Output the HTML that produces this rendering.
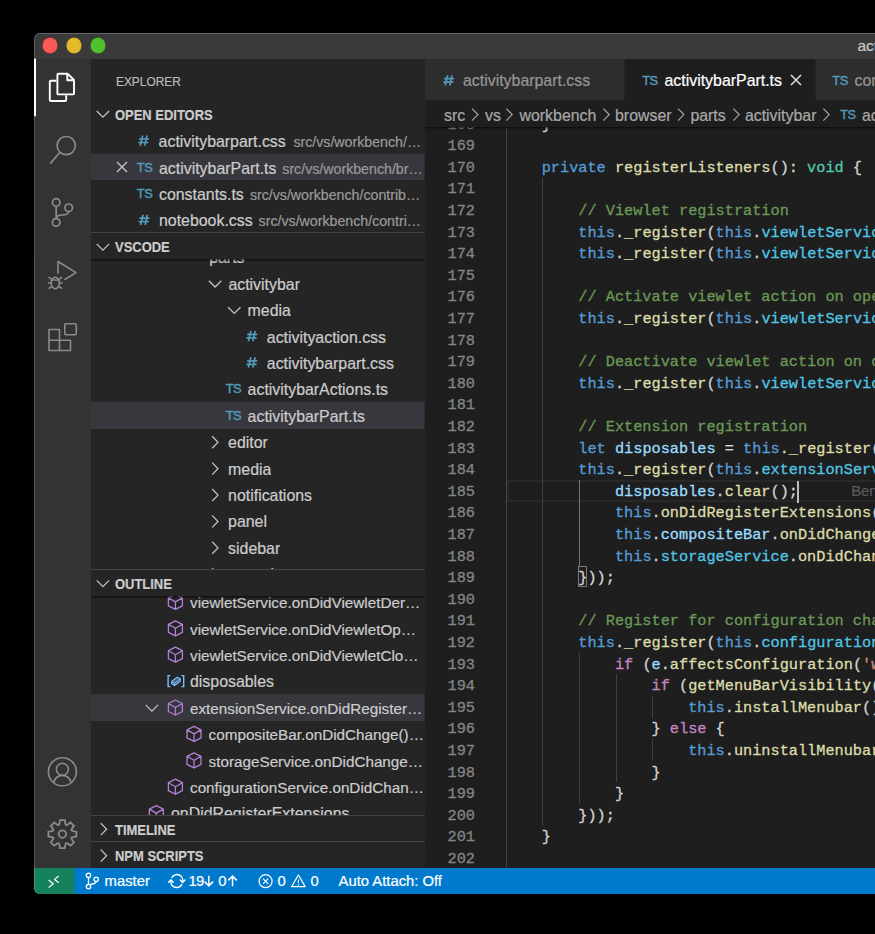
<!DOCTYPE html><html><head><meta charset="utf-8"><style>
*{margin:0;padding:0;box-sizing:border-box}
html,body{width:875px;height:934px;background:#000;overflow:hidden}
body{position:relative;font-family:"Liberation Sans",sans-serif;color:#ccc;-webkit-text-stroke:0.2px currentColor}
.a{position:absolute;white-space:nowrap}
#win{position:absolute;left:34px;top:32.5px;width:900px;height:861.5px;border-radius:6px;overflow:hidden;background:#1e1e1e}
#title{position:absolute;left:0;top:0;width:900px;height:26px;background:#3a3a3a}
.light{position:absolute;top:5.6px;width:14.6px;height:14.6px;border-radius:50%}
#act{position:absolute;left:0;top:26px;width:57px;height:809.5px;background:#333}
#side{position:absolute;left:57px;top:26px;width:333.5px;height:809.5px;background:#252526}
#status{position:absolute;left:0;top:835.5px;width:900px;height:26px;background:#007acc}
.row{position:absolute;height:26.4px;line-height:26.4px;font-size:15.9px;white-space:nowrap;color:#ccc;overflow:hidden;text-overflow:ellipsis}
.sel{position:absolute;left:91px;width:333.5px;height:26.4px;background:#37373d}
.hdr{position:absolute;left:91px;width:333.5px;height:27.4px;background:#252526;border-top:1px solid #434343}
.ht{position:absolute;font-size:14.4px;font-weight:700;color:#cccccc;line-height:26.4px;height:26.4px;transform:scaleX(0.9);transform-origin:0 0}
.desc{color:#9a9a9a;font-size:14.2px!important}
.ts{position:absolute;color:#519aba;font-weight:400;font-size:12.9px;letter-spacing:-0.45px;line-height:26.4px;height:26.4px;-webkit-text-stroke:0.45px currentColor}
.hash{position:absolute;color:#519aba;font-weight:700;font-size:16px;line-height:26.4px;height:26.4px}
.code{position:absolute;left:506px;height:21.6px;line-height:21.6px;font-family:"Liberation Mono",monospace;font-size:15.255px;white-space:pre;color:#d4d4d4;-webkit-text-stroke:0.3px currentColor}
.ln{position:absolute;left:420px;width:55px;text-align:right;height:21.6px;line-height:21.6px;font-family:"Liberation Mono",monospace;font-size:15.255px;color:#858585;-webkit-text-stroke:0.3px currentColor}
.k{color:#569cd6}.f{color:#dcdcaa}.c{color:#6a9955}.v{color:#9cdcfe}.p{color:#52c5e4}.t{color:#4ec9b0}.kw{color:#c586c0}.s{color:#ce9178}
.sb{position:absolute;top:867.6px;height:26px;line-height:26px;font-size:14.8px;color:#fff;white-space:nowrap}
</style></head><body><div id="win"><div id="title"><div class="light" style="left:8.9px;background:#fb5a55;box-shadow:0 0 0 0.6px #d64440"></div><div class="light" style="left:32.8px;background:#e4b92b;box-shadow:0 0 0 0.6px #c29a1e"></div><div class="light" style="left:56.8px;background:#50c02b;box-shadow:0 0 0 0.6px #3e9d22"></div></div><div id="act"></div><div id="side"></div><div id="status"></div></div><div class="a" style="left:424.5px;top:58.6px;width:460px;height:42.1px;background:#252526"></div><div class="a" style="left:424.5px;top:58.6px;width:199.5px;height:42.1px;background:#2d2d2d"></div><div class="a" style="left:625.3px;top:58.6px;width:189.4px;height:42.1px;background:#1e1e1e"></div><div class="a" style="left:815.8px;top:58.6px;width:80px;height:42.1px;background:#2d2d2d"></div><div class="a" style="left:463px;font-size:15.9px;line-height:41.6px;height:41.6px;top:60.3px;color:#969696">activitybarpart.css</div><div class="a" style="left:642.2px;color:#519aba;font-weight:400;font-size:12.9px;letter-spacing:-0.45px;-webkit-text-stroke:0.45px currentColor;line-height:41.6px;height:41.6px;top:59.5px">TS</div><div class="a" style="left:664.5px;font-size:15.9px;line-height:41.6px;height:41.6px;top:60.3px;color:#ffffff">activitybarPart.ts</div><div class="a" style="left:832.3px;color:#519aba;font-weight:400;font-size:12.9px;letter-spacing:-0.45px;-webkit-text-stroke:0.45px currentColor;line-height:41.6px;height:41.6px;top:59.5px">TS</div><div class="a" style="left:854.5px;font-size:15.9px;line-height:41.6px;height:41.6px;top:60.3px;color:#969696">constants.ts</div><div class="a" style="left:424.5px;top:100.2px;width:460px;height:768px;background:#1e1e1e;overflow:hidden"></div><div class="a" style="left:424.5px;top:100.2px;width:460px;height:768px;overflow:hidden"><div class="a" style="left:82.80000000000001px;top:379.40000000000003px;width:460px;height:22.8px;border:2.3px solid #282828;border-right:none"></div><div class="a" style="left:81.30000000000001px;top:12.600000000000009px;width:1px;height:21.6px;background:#404040"></div><div class="a" style="left:81.30000000000001px;top:34.2px;width:1px;height:21.6px;background:#404040"></div><div class="a" style="left:81.30000000000001px;top:55.8px;width:1px;height:21.6px;background:#404040"></div><div class="a" style="left:81.30000000000001px;top:77.40000000000002px;width:1px;height:21.6px;background:#404040"></div><div class="a" style="left:117.91200000000003px;top:77.40000000000002px;width:1px;height:21.6px;background:#404040"></div><div class="a" style="left:81.30000000000001px;top:99.00000000000001px;width:1px;height:21.6px;background:#404040"></div><div class="a" style="left:117.91200000000003px;top:99.00000000000001px;width:1px;height:21.6px;background:#404040"></div><div class="a" style="left:81.30000000000001px;top:120.60000000000001px;width:1px;height:21.6px;background:#404040"></div><div class="a" style="left:117.91200000000003px;top:120.60000000000001px;width:1px;height:21.6px;background:#404040"></div><div class="a" style="left:81.30000000000001px;top:142.2px;width:1px;height:21.6px;background:#404040"></div><div class="a" style="left:117.91200000000003px;top:142.2px;width:1px;height:21.6px;background:#404040"></div><div class="a" style="left:81.30000000000001px;top:163.8px;width:1px;height:21.6px;background:#404040"></div><div class="a" style="left:117.91200000000003px;top:163.8px;width:1px;height:21.6px;background:#404040"></div><div class="a" style="left:81.30000000000001px;top:185.40000000000003px;width:1px;height:21.6px;background:#404040"></div><div class="a" style="left:117.91200000000003px;top:185.40000000000003px;width:1px;height:21.6px;background:#404040"></div><div class="a" style="left:81.30000000000001px;top:207.00000000000006px;width:1px;height:21.6px;background:#404040"></div><div class="a" style="left:117.91200000000003px;top:207.00000000000006px;width:1px;height:21.6px;background:#404040"></div><div class="a" style="left:81.30000000000001px;top:228.60000000000002px;width:1px;height:21.6px;background:#404040"></div><div class="a" style="left:117.91200000000003px;top:228.60000000000002px;width:1px;height:21.6px;background:#404040"></div><div class="a" style="left:81.30000000000001px;top:250.2px;width:1px;height:21.6px;background:#404040"></div><div class="a" style="left:117.91200000000003px;top:250.2px;width:1px;height:21.6px;background:#404040"></div><div class="a" style="left:81.30000000000001px;top:271.8px;width:1px;height:21.6px;background:#404040"></div><div class="a" style="left:117.91200000000003px;top:271.8px;width:1px;height:21.6px;background:#404040"></div><div class="a" style="left:81.30000000000001px;top:293.40000000000003px;width:1px;height:21.6px;background:#404040"></div><div class="a" style="left:117.91200000000003px;top:293.40000000000003px;width:1px;height:21.6px;background:#404040"></div><div class="a" style="left:81.30000000000001px;top:315.00000000000006px;width:1px;height:21.6px;background:#404040"></div><div class="a" style="left:117.91200000000003px;top:315.00000000000006px;width:1px;height:21.6px;background:#404040"></div><div class="a" style="left:81.30000000000001px;top:336.6000000000001px;width:1px;height:21.6px;background:#404040"></div><div class="a" style="left:117.91200000000003px;top:336.6000000000001px;width:1px;height:21.6px;background:#404040"></div><div class="a" style="left:81.30000000000001px;top:358.2px;width:1px;height:21.6px;background:#404040"></div><div class="a" style="left:117.91200000000003px;top:358.2px;width:1px;height:21.6px;background:#404040"></div><div class="a" style="left:81.30000000000001px;top:379.8px;width:1px;height:21.6px;background:#404040"></div><div class="a" style="left:117.91200000000003px;top:379.8px;width:1px;height:21.6px;background:#404040"></div><div class="a" style="left:154.52400000000011px;top:379.8px;width:1px;height:21.6px;background:#747474"></div><div class="a" style="left:81.30000000000001px;top:401.40000000000003px;width:1px;height:21.6px;background:#404040"></div><div class="a" style="left:117.91200000000003px;top:401.40000000000003px;width:1px;height:21.6px;background:#404040"></div><div class="a" style="left:154.52400000000011px;top:401.40000000000003px;width:1px;height:21.6px;background:#747474"></div><div class="a" style="left:81.30000000000001px;top:423.00000000000006px;width:1px;height:21.6px;background:#404040"></div><div class="a" style="left:117.91200000000003px;top:423.00000000000006px;width:1px;height:21.6px;background:#404040"></div><div class="a" style="left:154.52400000000011px;top:423.00000000000006px;width:1px;height:21.6px;background:#747474"></div><div class="a" style="left:81.30000000000001px;top:444.6000000000001px;width:1px;height:21.6px;background:#404040"></div><div class="a" style="left:117.91200000000003px;top:444.6000000000001px;width:1px;height:21.6px;background:#404040"></div><div class="a" style="left:154.52400000000011px;top:444.6000000000001px;width:1px;height:21.6px;background:#747474"></div><div class="a" style="left:81.30000000000001px;top:466.2px;width:1px;height:21.6px;background:#404040"></div><div class="a" style="left:117.91200000000003px;top:466.2px;width:1px;height:21.6px;background:#404040"></div><div class="a" style="left:81.30000000000001px;top:487.8px;width:1px;height:21.6px;background:#404040"></div><div class="a" style="left:117.91200000000003px;top:487.8px;width:1px;height:21.6px;background:#404040"></div><div class="a" style="left:81.30000000000001px;top:509.40000000000003px;width:1px;height:21.6px;background:#404040"></div><div class="a" style="left:117.91200000000003px;top:509.40000000000003px;width:1px;height:21.6px;background:#404040"></div><div class="a" style="left:81.30000000000001px;top:531.0px;width:1px;height:21.6px;background:#404040"></div><div class="a" style="left:117.91200000000003px;top:531.0px;width:1px;height:21.6px;background:#404040"></div><div class="a" style="left:81.30000000000001px;top:552.6px;width:1px;height:21.6px;background:#404040"></div><div class="a" style="left:117.91200000000003px;top:552.6px;width:1px;height:21.6px;background:#404040"></div><div class="a" style="left:154.52400000000011px;top:552.6px;width:1px;height:21.6px;background:#404040"></div><div class="a" style="left:81.30000000000001px;top:574.1999999999999px;width:1px;height:21.6px;background:#404040"></div><div class="a" style="left:117.91200000000003px;top:574.1999999999999px;width:1px;height:21.6px;background:#404040"></div><div class="a" style="left:154.52400000000011px;top:574.1999999999999px;width:1px;height:21.6px;background:#404040"></div><div class="a" style="left:191.13600000000008px;top:574.1999999999999px;width:1px;height:21.6px;background:#404040"></div><div class="a" style="left:81.30000000000001px;top:595.8px;width:1px;height:21.6px;background:#404040"></div><div class="a" style="left:117.91200000000003px;top:595.8px;width:1px;height:21.6px;background:#404040"></div><div class="a" style="left:154.52400000000011px;top:595.8px;width:1px;height:21.6px;background:#404040"></div><div class="a" style="left:191.13600000000008px;top:595.8px;width:1px;height:21.6px;background:#404040"></div><div class="a" style="left:227.74800000000005px;top:595.8px;width:1px;height:21.6px;background:#404040"></div><div class="a" style="left:81.30000000000001px;top:617.4px;width:1px;height:21.6px;background:#404040"></div><div class="a" style="left:117.91200000000003px;top:617.4px;width:1px;height:21.6px;background:#404040"></div><div class="a" style="left:154.52400000000011px;top:617.4px;width:1px;height:21.6px;background:#404040"></div><div class="a" style="left:191.13600000000008px;top:617.4px;width:1px;height:21.6px;background:#404040"></div><div class="a" style="left:81.30000000000001px;top:639.0px;width:1px;height:21.6px;background:#404040"></div><div class="a" style="left:117.91200000000003px;top:639.0px;width:1px;height:21.6px;background:#404040"></div><div class="a" style="left:154.52400000000011px;top:639.0px;width:1px;height:21.6px;background:#404040"></div><div class="a" style="left:191.13600000000008px;top:639.0px;width:1px;height:21.6px;background:#404040"></div><div class="a" style="left:227.74800000000005px;top:639.0px;width:1px;height:21.6px;background:#404040"></div><div class="a" style="left:81.30000000000001px;top:660.6px;width:1px;height:21.6px;background:#404040"></div><div class="a" style="left:117.91200000000003px;top:660.6px;width:1px;height:21.6px;background:#404040"></div><div class="a" style="left:154.52400000000011px;top:660.6px;width:1px;height:21.6px;background:#404040"></div><div class="a" style="left:191.13600000000008px;top:660.6px;width:1px;height:21.6px;background:#404040"></div><div class="a" style="left:81.30000000000001px;top:682.1999999999999px;width:1px;height:21.6px;background:#404040"></div><div class="a" style="left:117.91200000000003px;top:682.1999999999999px;width:1px;height:21.6px;background:#404040"></div><div class="a" style="left:154.52400000000011px;top:682.1999999999999px;width:1px;height:21.6px;background:#404040"></div><div class="a" style="left:81.30000000000001px;top:703.8px;width:1px;height:21.6px;background:#404040"></div><div class="a" style="left:117.91200000000003px;top:703.8px;width:1px;height:21.6px;background:#404040"></div><div class="a" style="left:81.30000000000001px;top:725.4px;width:1px;height:21.6px;background:#404040"></div><div class="a" style="left:81.30000000000001px;top:747.0px;width:1px;height:21.6px;background:#404040"></div><div class="ln" style="left:-4.5px;top:14.40000000000001px">168</div><div class="code" style="left:80.60000000000002px;top:14.40000000000001px;tab-size:4">	}</div><div class="ln" style="left:-4.5px;top:36.0px">169</div><div class="code" style="left:80.60000000000002px;top:36.0px;tab-size:4"></div><div class="ln" style="left:-4.5px;top:57.599999999999994px">170</div><div class="code" style="left:80.60000000000002px;top:57.599999999999994px;tab-size:4">	<span class="k">private</span> <span class="f">registerListeners</span>(): <span class="t">void</span> {</div><div class="ln" style="left:-4.5px;top:79.20000000000002px">171</div><div class="code" style="left:80.60000000000002px;top:79.20000000000002px;tab-size:4"></div><div class="ln" style="left:-4.5px;top:100.80000000000001px">172</div><div class="code" style="left:80.60000000000002px;top:100.80000000000001px;tab-size:4">		<span class="c">// Viewlet registration</span></div><div class="ln" style="left:-4.5px;top:122.4px">173</div><div class="code" style="left:80.60000000000002px;top:122.4px;tab-size:4">		<span class="k">this</span>.<span class="f">_register</span>(<span class="k">this</span>.<span class="p">viewletService</span>.<span class="f">onDidViewletRegister</span></div><div class="ln" style="left:-4.5px;top:144.0px">174</div><div class="code" style="left:80.60000000000002px;top:144.0px;tab-size:4">		<span class="k">this</span>.<span class="f">_register</span>(<span class="k">this</span>.<span class="p">viewletService</span>.<span class="f">onDidViewletDeregister</span></div><div class="ln" style="left:-4.5px;top:165.60000000000002px">175</div><div class="code" style="left:80.60000000000002px;top:165.60000000000002px;tab-size:4"></div><div class="ln" style="left:-4.5px;top:187.20000000000005px">176</div><div class="code" style="left:80.60000000000002px;top:187.20000000000005px;tab-size:4">		<span class="c">// Activate viewlet action on opening</span></div><div class="ln" style="left:-4.5px;top:208.80000000000007px">177</div><div class="code" style="left:80.60000000000002px;top:208.80000000000007px;tab-size:4">		<span class="k">this</span>.<span class="f">_register</span>(<span class="k">this</span>.<span class="p">viewletService</span>.<span class="f">onDidViewletOpen</span></div><div class="ln" style="left:-4.5px;top:230.40000000000003px">178</div><div class="code" style="left:80.60000000000002px;top:230.40000000000003px;tab-size:4"></div><div class="ln" style="left:-4.5px;top:252.0px">179</div><div class="code" style="left:80.60000000000002px;top:252.0px;tab-size:4">		<span class="c">// Deactivate viewlet action on close</span></div><div class="ln" style="left:-4.5px;top:273.6px">180</div><div class="code" style="left:80.60000000000002px;top:273.6px;tab-size:4">		<span class="k">this</span>.<span class="f">_register</span>(<span class="k">this</span>.<span class="p">viewletService</span>.<span class="f">onDidViewletClose</span></div><div class="ln" style="left:-4.5px;top:295.20000000000005px">181</div><div class="code" style="left:80.60000000000002px;top:295.20000000000005px;tab-size:4"></div><div class="ln" style="left:-4.5px;top:316.80000000000007px">182</div><div class="code" style="left:80.60000000000002px;top:316.80000000000007px;tab-size:4">		<span class="c">// Extension registration</span></div><div class="ln" style="left:-4.5px;top:338.4000000000001px">183</div><div class="code" style="left:80.60000000000002px;top:338.4000000000001px;tab-size:4">		<span class="k">let</span> <span class="v">disposables</span> = <span class="k">this</span>.<span class="f">_register</span>(<span class="k">new</span> <span class="t">DisposableStore</span></div><div class="ln" style="left:-4.5px;top:360.0px">184</div><div class="code" style="left:80.60000000000002px;top:360.0px;tab-size:4">		<span class="k">this</span>.<span class="f">_register</span>(<span class="k">this</span>.<span class="p">extensionService</span>.<span class="f">onDidRegisterExtensions</span></div><div class="ln" style="left:-4.5px;top:381.6px">185</div><div class="code" style="left:80.60000000000002px;top:381.6px;tab-size:4">			<span class="v">disposables</span>.<span class="f">clear</span>();</div><div class="ln" style="left:-4.5px;top:403.20000000000005px">186</div><div class="code" style="left:80.60000000000002px;top:403.20000000000005px;tab-size:4">			<span class="k">this</span>.<span class="f">onDidRegisterExtensions</span>();</div><div class="ln" style="left:-4.5px;top:424.80000000000007px">187</div><div class="code" style="left:80.60000000000002px;top:424.80000000000007px;tab-size:4">			<span class="k">this</span>.<span class="v">compositeBar</span>.<span class="f">onDidChange</span>(() =&gt; </div><div class="ln" style="left:-4.5px;top:446.4000000000001px">188</div><div class="code" style="left:80.60000000000002px;top:446.4000000000001px;tab-size:4">			<span class="k">this</span>.<span class="p">storageService</span>.<span class="f">onDidChangeStorage</span>(e =&gt; </div><div class="ln" style="left:-4.5px;top:468.0px">189</div><div class="code" style="left:80.60000000000002px;top:468.0px;tab-size:4">		}));</div><div class="ln" style="left:-4.5px;top:489.6px">190</div><div class="code" style="left:80.60000000000002px;top:489.6px;tab-size:4"></div><div class="ln" style="left:-4.5px;top:511.20000000000005px">191</div><div class="code" style="left:80.60000000000002px;top:511.20000000000005px;tab-size:4">		<span class="c">// Register for configuration changes</span></div><div class="ln" style="left:-4.5px;top:532.8px">192</div><div class="code" style="left:80.60000000000002px;top:532.8px;tab-size:4">		<span class="k">this</span>.<span class="f">_register</span>(<span class="k">this</span>.<span class="p">configurationService</span>.</div><div class="ln" style="left:-4.5px;top:554.4px">193</div><div class="code" style="left:80.60000000000002px;top:554.4px;tab-size:4">			<span class="kw">if</span> (<span class="v">e</span>.<span class="f">affectsConfiguration</span>(<span class="s">&#x27;window.menuBarVisibility&#x27;</span></div><div class="ln" style="left:-4.5px;top:575.9999999999999px">194</div><div class="code" style="left:80.60000000000002px;top:575.9999999999999px;tab-size:4">				<span class="kw">if</span> (<span class="f">getMenuBarVisibility</span>(<span class="k">this</span></div><div class="ln" style="left:-4.5px;top:597.5999999999999px">195</div><div class="code" style="left:80.60000000000002px;top:597.5999999999999px;tab-size:4">					<span class="k">this</span>.<span class="f">installMenubar</span>();</div><div class="ln" style="left:-4.5px;top:619.1999999999999px">196</div><div class="code" style="left:80.60000000000002px;top:619.1999999999999px;tab-size:4">				} <span class="kw">else</span> {</div><div class="ln" style="left:-4.5px;top:640.8px">197</div><div class="code" style="left:80.60000000000002px;top:640.8px;tab-size:4">					<span class="k">this</span>.<span class="f">uninstallMenubar</span>();</div><div class="ln" style="left:-4.5px;top:662.4px">198</div><div class="code" style="left:80.60000000000002px;top:662.4px;tab-size:4">				}</div><div class="ln" style="left:-4.5px;top:683.9999999999999px">199</div><div class="code" style="left:80.60000000000002px;top:683.9999999999999px;tab-size:4">			}</div><div class="ln" style="left:-4.5px;top:705.5999999999999px">200</div><div class="code" style="left:80.60000000000002px;top:705.5999999999999px;tab-size:4">		}));</div><div class="ln" style="left:-4.5px;top:727.1999999999999px">201</div><div class="code" style="left:80.60000000000002px;top:727.1999999999999px;tab-size:4">	}</div><div class="ln" style="left:-4.5px;top:748.8px">202</div><div class="code" style="left:80.60000000000002px;top:748.8px;tab-size:4"></div><div class="a" style="left:426.70000000000005px;top:381.1px;height:21.6px;line-height:21.6px;font-size:14.8px;color:#5c5c5c">Benjamin Pasero, 2 years ago</div><div class="a" style="left:372.29999999999995px;top:380.40000000000003px;width:2.6px;height:22.200000000000003px;background:#bdbdbd"></div><div class="a" style="left:153.62400000000008px;top:465.59999999999997px;width:9.353px;height:21.200000000000003px;border:1px solid #7c7c7c"></div></div><div class="a" style="left:424.5px;top:100.7px;width:460px;height:26.4px;background:#1e1e1e;box-shadow:0 2px 2px -1px rgba(0,0,0,0.7)"></div><div class="a" style="left:444px;top:102.6px;height:26.4px;line-height:26.4px;font-size:15.9px;color:#a9a9a9">src</div><div class="a" style="left:485px;top:102.6px;height:26.4px;line-height:26.4px;font-size:15.9px;color:#a9a9a9">vs</div><div class="a" style="left:519.5px;top:102.6px;height:26.4px;line-height:26.4px;font-size:15.9px;color:#a9a9a9">workbench</div><div class="a" style="left:615px;top:102.6px;height:26.4px;line-height:26.4px;font-size:15.9px;color:#a9a9a9">browser</div><div class="a" style="left:690.4px;top:102.6px;height:26.4px;line-height:26.4px;font-size:15.9px;color:#a9a9a9">parts</div><div class="a" style="left:744.9px;top:102.6px;height:26.4px;line-height:26.4px;font-size:15.9px;color:#a9a9a9">activitybar</div><div class="a" style="left:862px;top:102.6px;height:26.4px;line-height:26.4px;font-size:15.9px;color:#a9a9a9">activitybarPart.ts</div><div class="a" style="left:840.3px;top:102.3px;height:26.4px;line-height:26.4px;font-size:12.6px;letter-spacing:-0.4px;font-weight:400;-webkit-text-stroke:0.45px currentColor;color:#519aba">TS</div><div class="a" style="left:0;top:0;width:875px;height:934px;overflow:hidden;clip-path:inset(58.6px 450.5px 66px 91px)"><div class="a" style="left:115.6px;top:61.1px;height:42px;line-height:42px;font-size:13px;transform:scaleX(0.915);transform-origin:0 0;color:#bbbbbb">EXPLORER</div><div class="ht" style="left:115.3px;top:101.7px">OPEN EDITORS</div><div class="sel" style="top:154.0px"></div><div class="row" style="left:158.6px;top:129.1px">activitybarpart.css</div><div class="row desc" style="left:293.4px;top:129.1px">src/vs/workbench/…</div><div class="ts" style="left:136.8px;top:154.5px">TS</div><div class="row" style="left:159px;top:155.5px">activitybarPart.ts</div><div class="row desc" style="left:282.3px;top:155.5px">src/vs/workbench/br…</div><div class="ts" style="left:136.8px;top:180.89999999999998px">TS</div><div class="row" style="left:159px;top:181.89999999999998px">constants.ts</div><div class="row desc" style="left:249.9px;top:181.89999999999998px">src/vs/workbench/contrib…</div><div class="row" style="left:159px;top:208.29999999999998px">notebook.css</div><div class="row desc" style="left:258.6px;top:208.29999999999998px">src/vs/workbench/contri…</div><div class="row" style="left:209.2px;top:245.3px">parts</div><div class="row" style="left:228.4px;top:271.7px">activitybar</div><div class="row" style="left:247.6px;top:298.1px">media</div><div class="row" style="left:266.8px;top:324.5px">activityaction.css</div><div class="row" style="left:266.8px;top:350.9px">activitybarpart.css</div><div class="ts" style="left:225.7px;top:376.3px">TS</div><div class="row" style="left:247.6px;top:377.3px">activitybarActions.ts</div><div class="sel" style="top:402.2px"></div><div class="ts" style="left:225.7px;top:402.7px">TS</div><div class="row" style="left:247.6px;top:403.7px">activitybarPart.ts</div><div class="row" style="left:228.1px;top:430.1px">editor</div><div class="row" style="left:228.1px;top:456.5px">media</div><div class="row" style="left:228.1px;top:482.9px">notifications</div><div class="row" style="left:228.1px;top:509.3px">panel</div><div class="row" style="left:228.1px;top:535.7px">sidebar</div><div class="row" style="left:228.1px;top:562.0999999999999px">statusbar</div><div class="row" style="left:190px;top:590.2px;font-size:15.25px">viewletService.onDidViewletDer…</div><div class="row" style="left:190px;top:616.6px;font-size:15.25px">viewletService.onDidViewletOp…</div><div class="row" style="left:190px;top:643.0px;font-size:15.25px">viewletService.onDidViewletClo…</div><div class="row" style="left:190px;top:669.4000000000001px;font-size:15.9px">disposables</div><div class="sel" style="top:694.3000000000001px"></div><div class="row" style="left:190px;top:695.8000000000001px;font-size:15.25px">extensionService.onDidRegister…</div><div class="row" style="left:208.6px;top:722.2px;font-size:15.25px">compositeBar.onDidChange()…</div><div class="row" style="left:208.6px;top:748.6px;font-size:15.25px">storageService.onDidChange…</div><div class="row" style="left:190px;top:775.0px;font-size:15.25px">configurationService.onDidChan…</div><div class="row" style="left:171px;top:801.4000000000001px;font-size:15.9px">onDidRegisterExtensions</div><svg class="a" style="left:0;top:0" width="875" height="934"><path d="M142.7,135.49999999999997 L140.2,145.79999999999998 M147,135.49999999999997 L144.7,145.79999999999998 M139,138.99999999999997 L149.1,138.99999999999997 M138.2,142.49999999999997 L148.4,142.49999999999997" stroke="#519aba" stroke-width="1.7"/><path d="M143.1,214.69999999999996 L140.6,224.99999999999997 M147.4,214.69999999999996 L145.1,224.99999999999997 M139.4,218.19999999999996 L149.5,218.19999999999996 M138.6,221.69999999999996 L148.8,221.69999999999996" stroke="#519aba" stroke-width="1.7"/><path d="M117,162 L127,172 M127,162 L117,172" stroke="#c5c5c5" stroke-width="1.4"/><path d="M208.89999999999998,280.79999999999995 L215.1,287.0 L221.29999999999998,280.79999999999995" fill="none" stroke="#c5c5c5" stroke-width="1.25"/><path d="M228.1,307.2 L234.3,313.40000000000003 L240.5,307.2" fill="none" stroke="#c5c5c5" stroke-width="1.25"/><path d="M250.89999999999998,330.9 L248.39999999999998,341.2 M255.2,330.9 L252.89999999999998,341.2 M247.2,334.4 L257.3,334.4 M246.39999999999998,337.9 L256.59999999999997,337.9" stroke="#519aba" stroke-width="1.7"/><path d="M250.89999999999998,357.29999999999995 L248.39999999999998,367.59999999999997 M255.2,357.29999999999995 L252.89999999999998,367.59999999999997 M247.2,360.79999999999995 L257.3,360.79999999999995 M246.39999999999998,364.29999999999995 L256.59999999999997,364.29999999999995" stroke="#519aba" stroke-width="1.7"/><path d="M212.20000000000002,436.2 L218.0,442.3 L212.20000000000002,448.2" fill="none" stroke="#c5c5c5" stroke-width="1.25"/><path d="M212.20000000000002,462.59999999999997 L218.0,468.7 L212.20000000000002,474.59999999999997" fill="none" stroke="#c5c5c5" stroke-width="1.25"/><path d="M212.20000000000002,488.99999999999994 L218.0,495.09999999999997 L212.20000000000002,500.99999999999994" fill="none" stroke="#c5c5c5" stroke-width="1.25"/><path d="M212.20000000000002,515.4 L218.0,521.5 L212.20000000000002,527.4" fill="none" stroke="#c5c5c5" stroke-width="1.25"/><path d="M212.20000000000002,541.8000000000001 L218.0,547.9000000000001 L212.20000000000002,553.8000000000001" fill="none" stroke="#c5c5c5" stroke-width="1.25"/><path d="M212.20000000000002,568.1999999999999 L218.0,574.3 L212.20000000000002,580.1999999999999" fill="none" stroke="#c5c5c5" stroke-width="1.25"/><path d="M175.4,594.4000000000001 L182.4,597.9000000000001 L182.4,605.9000000000001 L175.4,609.4000000000001 L168.4,605.9000000000001 L168.4,597.9000000000001 Z M168.4,597.9000000000001 L175.4,601.9000000000001 L182.4,597.9000000000001 M175.4,601.9000000000001 L175.4,609.4000000000001" fill="none" stroke="#b180d7" stroke-width="1.3" stroke-linejoin="round"/><path d="M175.4,620.8000000000001 L182.4,624.3000000000001 L182.4,632.3000000000001 L175.4,635.8000000000001 L168.4,632.3000000000001 L168.4,624.3000000000001 Z M168.4,624.3000000000001 L175.4,628.3000000000001 L182.4,624.3000000000001 M175.4,628.3000000000001 L175.4,635.8000000000001" fill="none" stroke="#b180d7" stroke-width="1.3" stroke-linejoin="round"/><path d="M175.4,647.2 L182.4,650.7 L182.4,658.7 L175.4,662.2 L168.4,658.7 L168.4,650.7 Z M168.4,650.7 L175.4,654.7 L182.4,650.7 M175.4,654.7 L175.4,662.2" fill="none" stroke="#b180d7" stroke-width="1.3" stroke-linejoin="round"/><path d="M170.4,675.6000000000001 L168.1,675.6000000000001 L168.1,686.6000000000001 L170.4,686.6000000000001 M181.4,675.6000000000001 L183.70000000000002,675.6000000000001 L183.70000000000002,686.6000000000001 L181.4,686.6000000000001" fill="none" stroke="#75beff" stroke-width="1.4"/><path d="M171.70000000000002,681.4000000000001 L177.20000000000002,677.3000000000002 L180.20000000000002,678.9000000000001 L180.20000000000002,681.3000000000002 L174.70000000000002,685.4000000000001 L171.70000000000002,683.8000000000002 Z" fill="#75beff" fill-opacity="0.35" stroke="#75beff" stroke-width="1.2" stroke-linejoin="round"/><path d="M171.70000000000002,681.4000000000001 L174.70000000000002,683.0000000000001 L180.20000000000002,678.9000000000001 M174.70000000000002,683.0000000000001 L174.70000000000002,685.4000000000001" fill="none" stroke="#75beff" stroke-width="1"/><path d="M145.7,704.9000000000001 L151.9,711.1000000000001 L158.1,704.9000000000001" fill="none" stroke="#c5c5c5" stroke-width="1.25"/><path d="M175.4,700.0000000000001 L182.4,703.5000000000001 L182.4,711.5000000000001 L175.4,715.0000000000001 L168.4,711.5000000000001 L168.4,703.5000000000001 Z M168.4,703.5000000000001 L175.4,707.5000000000001 L182.4,703.5000000000001 M175.4,707.5000000000001 L175.4,715.0000000000001" fill="none" stroke="#b180d7" stroke-width="1.3" stroke-linejoin="round"/><path d="M194,726.4000000000001 L201,729.9000000000001 L201,737.9000000000001 L194,741.4000000000001 L187,737.9000000000001 L187,729.9000000000001 Z M187,729.9000000000001 L194,733.9000000000001 L201,729.9000000000001 M194,733.9000000000001 L194,741.4000000000001" fill="none" stroke="#b180d7" stroke-width="1.3" stroke-linejoin="round"/><path d="M194,752.8000000000001 L201,756.3000000000001 L201,764.3000000000001 L194,767.8000000000001 L187,764.3000000000001 L187,756.3000000000001 Z M187,756.3000000000001 L194,760.3000000000001 L201,756.3000000000001 M194,760.3000000000001 L194,767.8000000000001" fill="none" stroke="#b180d7" stroke-width="1.3" stroke-linejoin="round"/><path d="M175.4,779.2 L182.4,782.7 L182.4,790.7 L175.4,794.2 L168.4,790.7 L168.4,782.7 Z M168.4,782.7 L175.4,786.7 L182.4,782.7 M175.4,786.7 L175.4,794.2" fill="none" stroke="#b180d7" stroke-width="1.3" stroke-linejoin="round"/><path d="M156.3,805.6000000000001 L163.3,809.1000000000001 L163.3,817.1000000000001 L156.3,820.6000000000001 L149.3,817.1000000000001 L149.3,809.1000000000001 Z M149.3,809.1000000000001 L156.3,813.1000000000001 L163.3,809.1000000000001 M156.3,813.1000000000001 L156.3,820.6000000000001" fill="none" stroke="#b180d7" stroke-width="1.3" stroke-linejoin="round"/></svg><div class="hdr" style="top:232.0px"></div><div class="ht" style="left:115.3px;top:234.2px">VSCODE</div><div class="a" style="left:91px;top:259.4px;width:333.5px;height:3px;background:linear-gradient(rgba(0,0,0,0.6),rgba(0,0,0,0))"></div><div class="hdr" style="top:568.5px"></div><div class="ht" style="left:115.3px;top:570.7px">OUTLINE</div><div class="a" style="left:91px;top:595.9px;width:333.5px;height:3px;background:linear-gradient(rgba(0,0,0,0.6),rgba(0,0,0,0))"></div><div class="hdr" style="top:814.5px"></div><div class="ht" style="left:115.3px;top:816.7px">TIMELINE</div><div class="hdr" style="top:841.0px"></div><div class="ht" style="left:115.3px;top:843.2px">NPM SCRIPTS</div><svg class="a" style="left:0;top:0" width="875" height="934"><path d="M96.7,111.0 L102.9,117.19999999999999 L109.1,111.0" fill="none" stroke="#c5c5c5" stroke-width="1.25"/><path d="M96.7,243.9 L102.9,250.1 L109.1,243.9" fill="none" stroke="#c5c5c5" stroke-width="1.25"/><path d="M96.7,580.4 L102.9,586.6 L109.1,580.4" fill="none" stroke="#c5c5c5" stroke-width="1.25"/><path d="M100.8,823.1 L106.6,829.2 L100.8,835.1" fill="none" stroke="#c5c5c5" stroke-width="1.25"/><path d="M100.8,849.6 L106.6,855.7 L100.8,861.6" fill="none" stroke="#c5c5c5" stroke-width="1.25"/></svg></div><div class="sb" style="left:104.6px">master</div><div class="sb" style="left:188.5px;letter-spacing:-0.7px">19</div><div class="sb" style="left:218.3px">0</div><div class="sb" style="left:277.5px">0</div><div class="sb" style="left:310.5px">0</div><div class="sb" style="left:338.6px">Auto Attach: Off</div><div class="a" style="left:857.5px;top:33px;height:26px;line-height:26px;font-size:15.5px;color:#cccccc">activitybarPart.ts — vscode</div><svg class="a" style="left:0;top:0" width="875" height="934" viewBox="0 0 875 934"><path d="M472.0,108.6 L477.9,114.6 L472.0,120.6" fill="none" stroke="#a0a0a0" stroke-width="1.3"/><path d="M506.3,108.6 L512.2,114.6 L506.3,120.6" fill="none" stroke="#a0a0a0" stroke-width="1.3"/><path d="M603.3,108.6 L609.2,114.6 L603.3,120.6" fill="none" stroke="#a0a0a0" stroke-width="1.3"/><path d="M678.0,108.6 L683.9000000000001,114.6 L678.0,120.6" fill="none" stroke="#a0a0a0" stroke-width="1.3"/><path d="M733.3,108.6 L739.2,114.6 L733.3,120.6" fill="none" stroke="#a0a0a0" stroke-width="1.3"/><path d="M823.3,108.6 L829.2,114.6 L823.3,120.6" fill="none" stroke="#a0a0a0" stroke-width="1.3"/><path d="M447.7,75.2 L445.2,85.5 M452,75.2 L449.7,85.5 M444,78.7 L454.1,78.7 M443.2,82.2 L453.4,82.2" stroke="#519aba" stroke-width="1.7"/><path d="M791,75 L801,85 M801,75 L791,85" stroke="#e0e0e0" stroke-width="1.5"/><rect x="34" y="58.6" width="2" height="57.6" fill="#ffffff"/><g fill="none" stroke="#ffffff" stroke-width="1.9" stroke-linejoin="round"><path d="M56.5,80.8 L50.8,80.8 Q49.8,80.8 49.8,81.8 L49.8,100 Q49.8,101 50.8,101 L65.2,101 Q66.2,101 66.2,100 L66.2,95.3"/><path d="M58.4,73.8 L67.8,73.8 L74,80 L74,93.4 Q74,94.4 73,94.4 L58.4,94.4 Q57.4,94.4 57.4,93.4 L57.4,74.8 Q57.4,73.8 58.4,73.8 Z"/><path d="M67.3,74 L67.3,80.3 L73.6,80.3" stroke-width="1.9"/></g><g fill="none" stroke="#8b8b8b" stroke-width="1.7"><circle cx="66.2" cy="145.6" r="9.1"/><path d="M59.8,152.3 L50.3,163.6"/></g><g fill="none" stroke="#8b8b8b" stroke-width="1.7"><circle cx="56.2" cy="202.5" r="3.8"/><circle cx="68.7" cy="207.8" r="3.8"/><circle cx="56.2" cy="222.4" r="3.8"/><path d="M56.2,206.3 L56.2,218.6"/><path d="M68.7,211.6 C68.2,214.5 66,215 62.5,215 C59,215 56.6,216 56.2,218.6"/></g><g fill="none" stroke="#8b8b8b" stroke-width="1.6" stroke-linejoin="round"><path d="M58,273.5 L58,261.5 L76,272.6 L64.4,279.8"/><ellipse cx="55.3" cy="283" rx="4.1" ry="5.7"/><path d="M48.5,277.2 L51.6,279.4 M62.1,277.2 L59,279.4 M48,283 L51.2,283 M59.4,283 L62.6,283 M48.6,288.6 L51.6,286.4 M62,288.6 L59,286.4 M51.4,280 L59.2,280"/></g><g fill="none" stroke="#8b8b8b" stroke-width="1.6" stroke-linejoin="round"><path d="M49,329.5 L59.5,329.5 L59.5,340.2 L70.5,340.2 L70.5,350.5 L49,350.5 Z M49,340.2 L59.5,340.2 L59.5,350.5"/><rect x="64.8" y="323.8" width="11.5" height="11" rx="1"/></g><g fill="none" stroke="#8b8b8b" stroke-width="1.6"><circle cx="62.4" cy="771.8" r="14"/><circle cx="62.4" cy="769.2" r="6"/><path d="M53.9,782 C55.5,777.3 58.5,775.4 62.4,775.4 C66.3,775.4 69.3,777.3 70.9,782"/></g><g fill="none" stroke="#8b8b8b" stroke-width="1.8" stroke-linejoin="miter"><path d="M60.00,820.10 L64.80,820.10 L65.33,823.50 L66.11,825.14 L67.82,824.53 L70.60,822.51 L73.99,825.90 L71.97,828.68 L71.36,830.39 L73.00,831.17 L76.40,831.70 L76.40,836.50 L73.00,837.03 L71.36,837.81 L71.97,839.52 L73.99,842.30 L70.60,845.69 L67.82,843.67 L66.11,843.06 L65.33,844.70 L64.80,848.10 L60.00,848.10 L59.47,844.70 L58.69,843.06 L56.98,843.67 L54.20,845.69 L50.81,842.30 L52.83,839.52 L53.44,837.81 L51.80,837.03 L48.40,836.50 L48.40,831.70 L51.80,831.17 L53.44,830.39 L52.83,828.68 L50.81,825.90 L54.20,822.51 L56.98,824.53 L58.69,825.14 L59.47,823.50 Z"/><circle cx="62.4" cy="834.1" r="3.7"/></g><path d="M34,868 H74.4 V894 H40 A6,6 0 0 1 34,888 Z" fill="#16825d"/><path d="M48.6,880 L53.2,883.8 L48.6,887.6 M58.7,876 L54.5,879.4 L58.7,882.8" fill="none" stroke="#fff" stroke-width="1.2"/><g fill="none" stroke="#fff" stroke-width="1.3"><circle cx="88.5" cy="875.3" r="2.2"/><circle cx="88.5" cy="886.6" r="2.2"/><circle cx="96.2" cy="879.3" r="2.2"/><path d="M88.5,877.5 L88.5,884.4 M96.2,881.5 C96,884.5 91.5,883.5 89.5,884.8"/></g><g fill="none" stroke="#fff" stroke-width="1.4" stroke-linecap="round" stroke-linejoin="round"><path d="M172,877.4 A5.8,5.8 0 0 1 182.6,881.8"/><path d="M180.2,880 L182.6,882.4 L185,880"/><path d="M181.7,884.6 A5.8,5.8 0 0 1 170.9,881.5"/><path d="M168.6,882.2 L170.9,879.8 L173.2,882.2"/></g><g fill="none" stroke="#fff" stroke-width="1.5"><path d="M208.85,875.8 L208.85,886 M204.6,881.6 L208.85,885.9 L213.1,881.6"/><path d="M232.55,886.2 L232.55,876 M228.3,880.4 L232.55,876.1 L236.8,880.4"/></g><g fill="none" stroke="#fff" stroke-width="1.2"><circle cx="265.6" cy="881.2" r="6.5"/><path d="M263,878.6 L268.2,883.8 M268.2,878.6 L263,883.8"/></g><g fill="none" stroke="#fff" stroke-width="1.2" stroke-linejoin="round"><path d="M298.4,875 L305.2,886.6 L291.6,886.6 Z"/><path d="M298.4,879.4 L298.4,883 M298.4,884.3 L298.4,885.4"/></g></svg><div class="a" style="left:34px;top:32.5px;width:900px;height:861.5px;border-radius:6px;border-top:1.2px solid rgba(255,255,255,0.22);border-left:1px solid rgba(255,255,255,0.18)"></div></body></html>
